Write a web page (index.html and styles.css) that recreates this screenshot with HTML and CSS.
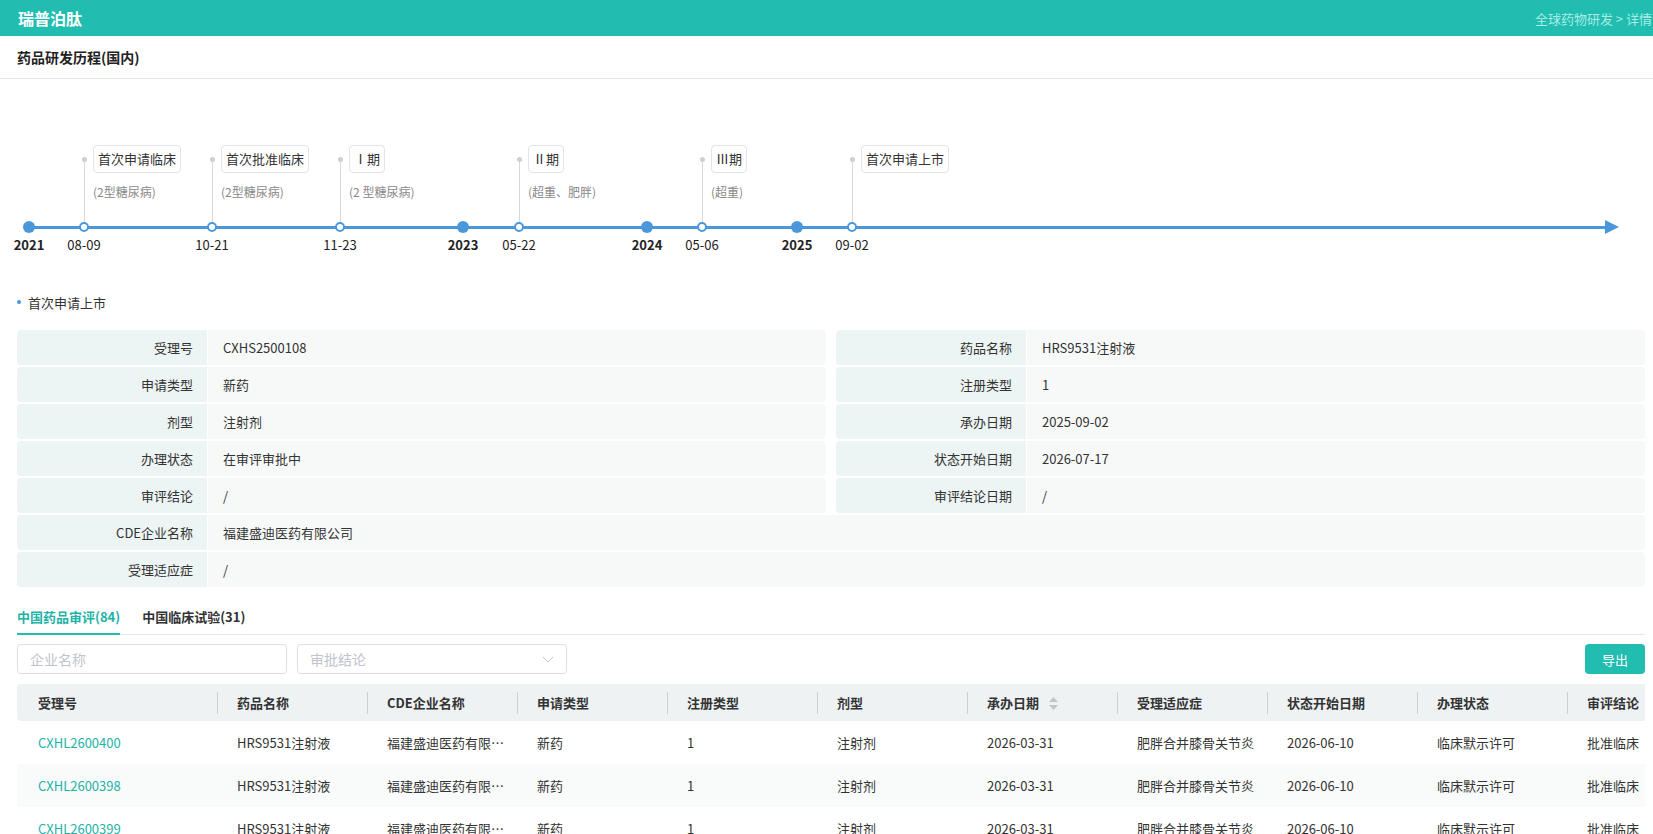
FILE: index.html
```html
<!DOCTYPE html>
<html lang="zh-CN">
<head>
<meta charset="utf-8">
<title>瑞普泊肽</title>
<link rel="stylesheet" href="styles.css">
</head>
<body>
<header class="topbar">
  <div class="brand">瑞普泊肽</div>
  <div class="crumb">全球药物研发 &gt; 详情</div>
</header>
<div class="section-head">药品研发历程(国内)</div>
<main class="main">
  <div class="timeline">
    <div class="tl-axis"></div>

    <div class="tl-node" style="left:12px"><span class="tl-dot"></span><span class="tl-date year">2021</span></div>
    <div class="tl-node" style="left:67px"><span class="tl-stem"></span><span class="tl-box">首次申请临床</span><span class="tl-sub">(2型糖尿病)</span><span class="tl-ring"></span><span class="tl-date">08-09</span></div>
    <div class="tl-node" style="left:195px"><span class="tl-stem"></span><span class="tl-box">首次批准临床</span><span class="tl-sub">(2型糖尿病)</span><span class="tl-ring"></span><span class="tl-date">10-21</span></div>
    <div class="tl-node" style="left:323px"><span class="tl-stem"></span><span class="tl-box">Ⅰ期</span><span class="tl-sub">(2 型糖尿病)</span><span class="tl-ring"></span><span class="tl-date">11-23</span></div>
    <div class="tl-node" style="left:446px"><span class="tl-dot"></span><span class="tl-date year">2023</span></div>
    <div class="tl-node" style="left:502px"><span class="tl-stem"></span><span class="tl-box">Ⅱ期</span><span class="tl-sub">(超重、肥胖)</span><span class="tl-ring"></span><span class="tl-date">05-22</span></div>
    <div class="tl-node" style="left:630px"><span class="tl-dot"></span><span class="tl-date year">2024</span></div>
    <div class="tl-node" style="left:685px"><span class="tl-stem"></span><span class="tl-box">Ⅲ期</span><span class="tl-sub">(超重)</span><span class="tl-ring"></span><span class="tl-date">05-06</span></div>
    <div class="tl-node" style="left:780px"><span class="tl-dot"></span><span class="tl-date year">2025</span></div>
    <div class="tl-node" style="left:835px"><span class="tl-stem"></span><span class="tl-box">首次申请上市</span><span class="tl-ring"></span><span class="tl-date">09-02</span></div>
  </div>

  <div class="sub-title">首次申请上市</div>

  <div class="info-grid">
    <div class="info-row"><div class="info-label">受理号</div><div class="info-value">CXHS2500108</div></div>
    <div class="info-row"><div class="info-label">药品名称</div><div class="info-value">HRS9531注射液</div></div>
    <div class="info-row"><div class="info-label">申请类型</div><div class="info-value">新药</div></div>
    <div class="info-row"><div class="info-label">注册类型</div><div class="info-value">1</div></div>
    <div class="info-row"><div class="info-label">剂型</div><div class="info-value">注射剂</div></div>
    <div class="info-row"><div class="info-label">承办日期</div><div class="info-value">2025-09-02</div></div>
    <div class="info-row"><div class="info-label">办理状态</div><div class="info-value">在审评审批中</div></div>
    <div class="info-row"><div class="info-label">状态开始日期</div><div class="info-value">2026-07-17</div></div>
    <div class="info-row"><div class="info-label">审评结论</div><div class="info-value">/</div></div>
    <div class="info-row"><div class="info-label">审评结论日期</div><div class="info-value">/</div></div>
    <div class="info-row full"><div class="info-label">CDE企业名称</div><div class="info-value">福建盛迪医药有限公司</div></div>
    <div class="info-row full"><div class="info-label">受理适应症</div><div class="info-value">/</div></div>
  </div>

  <div class="tabs">
    <div class="tab active">中国药品审评(84)</div>
    <div class="tab">中国临床试验(31)</div>
  </div>

  <div class="filters">
    <div class="input">企业名称</div>
    <div class="input select">审批结论
      <svg class="chev" width="12" height="7" viewBox="0 0 12 7"><polyline points="1,1 6,6 11,1" fill="none" stroke="#c0c4cc" stroke-width="1"/></svg>
    </div>
    <div class="btn-export">导出</div>
  </div>

  <div class="table-wrap">
    <table class="grid">
      <colgroup>
        <col class="c-first"><col class="c"><col class="c"><col class="c"><col class="c"><col class="c"><col class="c"><col class="c"><col class="c"><col class="c"><col class="c">
      </colgroup>
      <thead>
        <tr>
          <th>受理号</th><th>药品名称</th><th>CDE企业名称</th><th>申请类型</th><th>注册类型</th><th>剂型</th>
          <th>承办日期<svg class="sort" width="9" height="13" viewBox="0 0 9 13"><polygon points="4.5,0 9,5 0,5" fill="#c0c4cc"/><polygon points="0,8 9,8 4.5,13" fill="#c0c4cc"/></svg></th>
          <th>受理适应症</th><th>状态开始日期</th><th>办理状态</th><th>审评结论</th>
        </tr>
      </thead>
      <tbody>
        <tr><td class="link">CXHL2600400</td><td>HRS9531注射液</td><td>福建盛迪医药有限公司</td><td>新药</td><td>1</td><td>注射剂</td><td>2026-03-31</td><td>肥胖合并膝骨关节炎</td><td>2026-06-10</td><td>临床默示许可</td><td>批准临床</td></tr>
        <tr><td class="link">CXHL2600398</td><td>HRS9531注射液</td><td>福建盛迪医药有限公司</td><td>新药</td><td>1</td><td>注射剂</td><td>2026-03-31</td><td>肥胖合并膝骨关节炎</td><td>2026-06-10</td><td>临床默示许可</td><td>批准临床</td></tr>
        <tr><td class="link">CXHL2600399</td><td>HRS9531注射液</td><td>福建盛迪医药有限公司</td><td>新药</td><td>1</td><td>注射剂</td><td>2026-03-31</td><td>肥胖合并膝骨关节炎</td><td>2026-06-10</td><td>临床默示许可</td><td>批准临床</td></tr>
        <tr><td class="link">CXHL2600397</td><td>HRS9531注射液</td><td>福建盛迪医药有限公司</td><td>新药</td><td>1</td><td>注射剂</td><td>2026-03-31</td><td>肥胖合并膝骨关节炎</td><td>2026-06-10</td><td>临床默示许可</td><td>批准临床</td></tr>
      </tbody>
    </table>
  </div>
</main>
</body>
</html>
```
FILE: styles.css
```css
html, body {
  margin: 0;
  padding: 0;
  overflow: hidden;
  background: #fff;
}
body {
  font-family: "Noto Sans CJK SC", "Noto Sans", sans-serif;
  font-size: 13px;
  color: #333;
}

/* top bar */
.topbar {
  height: 36px;
  background: #20bdb0;
  display: flex;
  align-items: center;
  justify-content: space-between;
  padding: 0 1px 0 18px;
}
.brand {
  color: #fff;
  font-size: 16px;
  font-weight: 700;
}
.crumb {
  color: #a9ece5;
  font-size: 13px;
}

.section-head {
  height: 42px;
  border-bottom: 1px solid #e8e8e8;
  display: flex;
  align-items: center;
  padding-left: 17px;
  font-size: 14px;
  font-weight: 700;
  color: #222;
}

.main {
  padding: 0 8px 0 17px;
}

/* timeline diagram */
.timeline {
  position: relative;
  height: 185px;
}
.tl-axis {
  position: absolute;
  left: 12px;
  top: 147px;
  width: 1576px;
  height: 3px;
  background: #4a98db;
}
.tl-axis::after {
  content: "";
  position: absolute;
  right: -14px;
  top: -6px;
  border-left: 14px solid #4a98db;
  border-top: 7.5px solid transparent;
  border-bottom: 7.5px solid transparent;
}
.tl-node {
  position: absolute;
  top: 0;
  width: 0;
  height: 100%;
}
.tl-stem {
  position: absolute;
  left: 0;
  top: 80px;
  width: 1px;
  height: 68px;
  background: #d5d9de;
}
.tl-stem::before {
  content: "";
  position: absolute;
  left: -2px;
  top: -2.5px;
  width: 5px;
  height: 5px;
  border-radius: 50%;
  background: #ccd0d5;
}
.tl-box {
  position: absolute;
  left: 9px;
  top: 66px;
  height: 28px;
  box-sizing: border-box;
  border: 1px solid #dfe4ea;
  border-radius: 4px;
  padding: 0 4px;
  line-height: 26px;
  white-space: nowrap;
  font-size: 13px;
  color: #333;
  background: #fff;
}
.tl-sub {
  position: absolute;
  left: 9px;
  top: 105px;
  line-height: 16px;
  font-size: 12px;
  color: #888;
  white-space: nowrap;
}
.tl-ring {
  position: absolute;
  left: -5px;
  top: 143px;
  width: 10px;
  height: 10px;
  box-sizing: border-box;
  border: 2.5px solid #4a98db;
  border-radius: 50%;
  background: #fff;
}
.tl-dot {
  position: absolute;
  left: -6px;
  top: 142px;
  width: 12px;
  height: 12px;
  border-radius: 50%;
  background: #4a98db;
}
.tl-date {
  position: absolute;
  left: 0;
  top: 158px;
  transform: translateX(-50%);
  line-height: 16px;
  font-size: 13px;
  color: #222;
  white-space: nowrap;
}
.tl-date.year {
  font-weight: 700;
}

/* info block */
.sub-title {
  display: flex;
  align-items: center;
  height: 20px;
  margin-top: 28px;
  font-size: 13px;
  color: #333;
}
.sub-title::before {
  content: "";
  width: 4px;
  height: 4px;
  border-radius: 50%;
  background: #4a98db;
  margin-right: 7px;
}
.info-grid {
  margin-top: 18px;
  display: grid;
  grid-template-columns: 1fr 1fr;
  column-gap: 10px;
  row-gap: 2px;
}
.info-row {
  display: flex;
  gap: 1px;
  height: 35px;
  border-radius: 4px;
  overflow: hidden;
}
.info-row.full {
  grid-column: 1 / -1;
}
.info-label {
  width: 190px;
  flex: none;
  box-sizing: border-box;
  padding-right: 14px;
  text-align: right;
  line-height: 35px;
  background: #edf4f4;
  color: #333;
}
.info-value {
  flex: 1;
  padding-left: 15px;
  line-height: 35px;
  background: #f7f9f9;
  color: #333;
}

/* tabs */
.tabs {
  margin-top: 14px;
  display: flex;
  gap: 22px;
  border-bottom: 1px solid #e4e7ed;
}
.tab {
  line-height: 32px;
  font-size: 13px;
  font-weight: 700;
  color: #333;
  border-bottom: 2px solid transparent;
  margin-bottom: -1px;
}
.tab.active {
  color: #1db3a6;
  border-bottom-color: #20bdb0;
}

/* filters */
.filters {
  margin-top: 9px;
  display: flex;
  gap: 10px;
  height: 30px;
}
.input {
  width: 270px;
  box-sizing: border-box;
  border: 1px solid #dcdfe6;
  border-radius: 4px;
  padding: 0 12px;
  display: flex;
  align-items: center;
  justify-content: space-between;
  color: #c0c4cc;
  font-size: 14px;
}
.btn-export {
  margin-left: auto;
  width: 60px;
  background: #20bdb0;
  color: #fff;
  border-radius: 4px;
  display: flex;
  align-items: center;
  justify-content: center;
  font-size: 13px;
}

/* table */
.table-wrap {
  margin-top: 10px;
  overflow: hidden;
}
.grid {
  border-collapse: separate;
  border-spacing: 0;
  table-layout: fixed;
  width: 1700px;
}
.c-first { width: 200px; }
.c { width: 150px; }
.grid th {
  position: relative;
  height: 37px;
  padding: 0 12px 0 20px;
  background: #eef2f3;
  text-align: left;
  font-weight: 700;
  font-size: 13px;
  color: #333;
  white-space: nowrap;
}
.grid th:first-child {
  padding-left: 21px;
  border-radius: 4px 0 0 4px;
}
.grid th + th::before {
  content: "";
  position: absolute;
  left: 0;
  top: 8px;
  bottom: 7px;
  width: 1px;
  background: #c9d1d3;
}
.sort {
  vertical-align: middle;
  margin-left: 10px;
  margin-top: -2px;
}
.grid td {
  height: 43px;
  padding: 0 12px 0 20px;
  white-space: nowrap;
  overflow: hidden;
  text-overflow: ellipsis;
  color: #333;
  font-size: 13px;
}
.grid td:first-child {
  padding-left: 21px;
}
.grid tbody tr:nth-child(even) td {
  background: #f9fafa;
}
.grid tbody tr:nth-child(even) td:first-child {
  border-radius: 4px 0 0 4px;
}
.grid td.link {
  color: #1db3a6;
}
```
